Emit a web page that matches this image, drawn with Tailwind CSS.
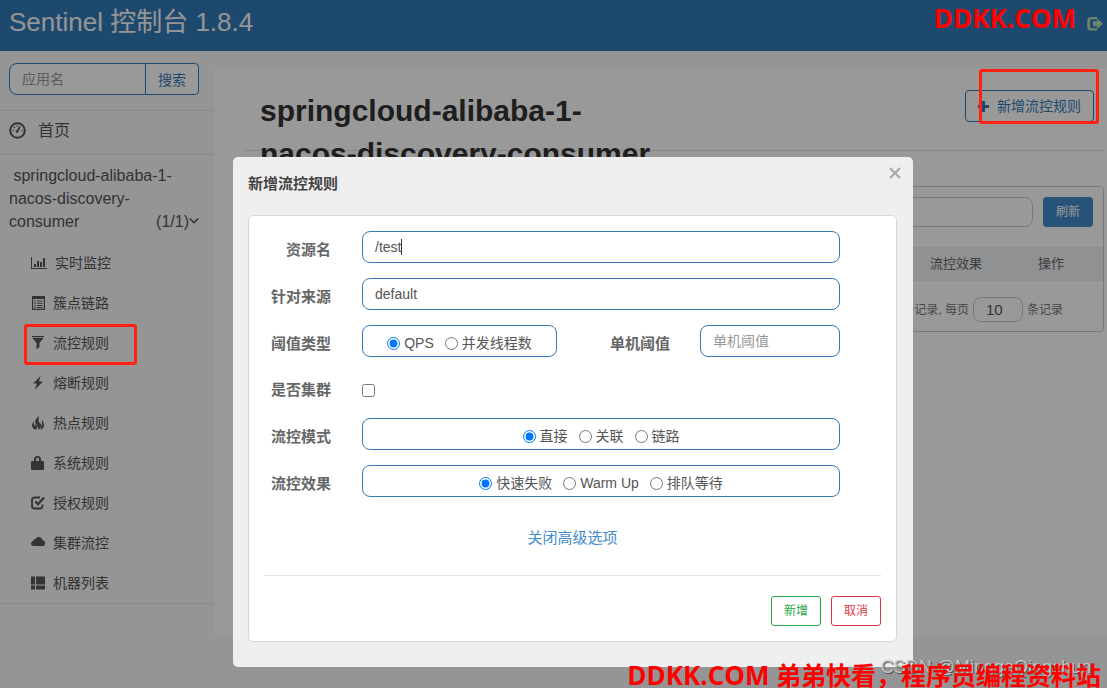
<!DOCTYPE html>
<html lang="zh-CN">
<head>
    <meta charset="UTF-8">
    <meta name="viewport" content="width=device-width, initial-scale=1.0">
    <title>Sentinel 控制台</title>
    <script src="https://cdn.jsdelivr.net/npm/@tailwindcss/browser@4"></script>
</head>
<body class="relative min-h-screen overflow-x-hidden bg-[#f8f8f8] font-['Liberation_Sans','Noto_Sans_CJK_SC',sans-serif] text-sm text-[#555]">
    <!-- 顶部导航 -->
    <header class="flex h-[51px] items-center justify-between bg-[#337ab7] pr-1 pl-[9px]">
        <a href="#" class="pb-2 text-[26px] leading-9 text-[#f8f8f8]">Sentinel 控制台 1.8.4</a>
        <a href="#" aria-label="退出" class="pb-1 text-[#b8dcb8]">
            <svg class="h-4 w-4" viewBox="0 0 16 16" fill="currentColor"><path d="M10 1v2.300H4.500Q3 3.300 3 4.800v5.900Q3 12.200 4.500 12.200H10v2.300H4Q0.300 14.500 0.300 11V4.500Q0.300 1 4 1z"/><path d="M10 2.500 16 7.700l-6 5.200V10.200H6V5.200h4z"/></svg>
        </a>
    </header>

    <div class="flex">
        <!-- 侧边栏 -->
        <aside class="w-[214px] shrink-0 text-[#555]">
            <form class="flex border-b border-[#e7e7e7] pt-3 pr-[15px] pb-[15px] pl-[9px]">
                <input type="text" aria-label="应用名" placeholder="应用名" class="h-8 w-0 flex-1 rounded-l-lg border border-[#337ab7] bg-white px-3 text-sm placeholder:text-[#999]">
                <button type="button" class="-ml-px h-8 w-[54px] rounded-r border border-[#337ab7] bg-white pt-px text-sm text-[#337ab7]">搜索</button>
            </form>
            <a href="#" class="flex h-11 items-center gap-3 border-b border-[#e7e7e7] pb-1 pl-[9px] text-base">
                <svg class="h-[17px] w-[17px]" viewBox="0 0 17 17" fill="none" stroke="currentColor"><circle cx="8.500" cy="8.500" r="7.300" stroke-width="2"/><path d="M8 10 11 4.500" stroke-width="1.600"/><circle cx="8" cy="9.500" r="1.300" fill="currentColor" stroke="none"/><path d="M3.500 8.500h1.500M12.500 8.500h1M5 5l1 1M8 3.500v1.300" stroke-width="1.200"/></svg>
                首页
            </a>
            <nav class="border-b border-[#e7e7e7] pt-[9px]">
                <a href="#" class="block pr-[15px] pb-[10px] pl-[9px] text-base leading-[23px]">
                    <span class="block pr-4">&nbsp;springcloud-alibaba-1-nacos-discovery-</span>
                    <span class="flex items-center justify-between">
                        consumer
                        <span class="flex items-center">(1/1)
                            <svg class="h-[10px] w-[10px]" viewBox="0 0 10 10" fill="none" stroke="currentColor" stroke-width="1.600"><path d="M.8 1.500 5 5.700 9.200 1.500"/></svg>
                        </span>
                    </span>
                </a>
                <ul class="pl-[31px]">
                    <li><a href="#" class="flex h-10 items-center gap-2">
                        <svg class="h-4 w-4" viewBox="0 0 16 16" fill="currentColor"><path d="M0 2h1v11h15v1H0zM3 9h2v3H3zM6 6h2v6H6zM9 7h2v5H9zM12 3h2v9h-2z"/></svg>
                        实时监控</a></li>
                    <li><a href="#" class="flex h-10 items-center gap-2">
                        <svg class="h-[14px] w-[14px]" viewBox="0 0 14 14" fill="currentColor"><path fill-rule="evenodd" d="M1 0h13v14H1zM2.200 3v9.800h10.600V3z"/><path d="M3.500 4.500h1.300v1.200H3.500zM6 4.500h5.500v1H6zM3.500 6.700h1.300v1.200H3.500zM6 6.700h5.500v1H6zM3.500 9h1.300v1.200H3.500zM6 9h5.500v1H6zM3.500 11h1.300v1H3.500zM6 11h5.500v1H6z"/></svg>
                        簇点链路</a></li>
                    <li><a href="#" class="flex h-10 items-center gap-2">
                        <svg class="h-[14px] w-[14px]" viewBox="0 0 14 14" fill="currentColor"><path d="M1 0h12v1.200H1zM1.500 2h11L8.500 7v4L5.500 13.500V7z"/></svg>
                        流控规则</a></li>
                    <li><a href="#" class="flex h-10 items-center gap-2">
                        <svg class="h-[14px] w-[14px]" viewBox="0 0 14 14" fill="currentColor"><path d="M9.500 0 2 7.500h4L3.500 14 12 5.500H8z"/></svg>
                        熔断规则</a></li>
                    <li><a href="#" class="flex h-10 items-center gap-2">
                        <svg class="h-[14px] w-[14px]" viewBox="0 0 14 14" fill="currentColor"><path d="M7.500 0c-1 2-4 3.500-3.200 6.500C4.600 8 6 8.500 5.500 10.500 5.200 9.200 4 9 4.200 7.500 3.500 8 3.500 9.500 4 10.500 3 10 2.500 8 3.300 5.500 1.500 6.500.5 9 1.300 11 2 12.700 3.500 13.500 5.500 14 4.500 12.500 6.500 12 6.700 10c.8 1 .3 2.500.5 4C8.500 13.500 9.500 12 9 10c.8.700 1 2 .5 3.800 2.500-.8 4-3.300 3.300-6C12.500 6.300 11.500 5.500 11.700 4c-1 .8-1 2.500-.5 3.500.3 1 0 2-.7 2.500C10.800 7 8 7.500 7.500 5 7.200 3.500 8.500 2 7.500 0z"/></svg>
                        热点规则</a></li>
                    <li><a href="#" class="flex h-10 items-center gap-2">
                        <svg class="h-[14px] w-[14px]" viewBox="0 0 14 14" fill="currentColor"><path fill-rule="evenodd" d="M3 5V3.500Q3 0 6.300 0h.5Q10 0 10 3.500V5h2q1 0 1 1v7q0 1-1 1H1q-1 0-1-1V6q0-1 1-1zM5 5h3V3.500Q8 1.700 6.500 1.700 5 1.700 5 3.500z"/></svg>
                        系统规则</a></li>
                    <li><a href="#" class="flex h-10 items-center gap-2">
                        <svg class="h-[14px] w-[14px]" viewBox="0 0 14 14" fill="none" stroke="currentColor"><path d="M9 1.500H3.500Q1 1.500 1 4v6q0 2.500 2.500 2.500H9q2.500 0 2.500-2.500V8.500" stroke-width="1.800"/><path d="M4.300 5.500 7 8.200 13 1.500" stroke-width="2.300"/></svg>
                        授权规则</a></li>
                    <li><a href="#" class="flex h-10 items-center gap-2">
                        <svg class="h-[14px] w-[14px]" viewBox="0 0 14 14" fill="currentColor"><path d="M3 10Q0 10 0 7.500q0-2 2-2.500Q2.500 3 4.500 3 5.500 1 7.700 1q3 0 3.500 3Q14 4.500 14 7.200 14 10 11.500 10z"/></svg>
                        集群流控</a></li>
                    <li><a href="#" class="flex h-10 items-center gap-2">
                        <svg class="h-[14px] w-[14px]" viewBox="0 0 14 14" fill="currentColor"><path d="M0 0.500h4v8H0zM5 0.500h9v8H5zM0 9.500h4v4H0zM5 9.500h9v4H5z"/></svg>
                        机器列表</a></li>
                </ul>
            </nav>
        </aside>

        <!-- 规则列表 -->
        <main class="mt-[17px] min-h-[calc(100vh-120px)] flex-1 bg-white pr-[3px] pl-[30px]">
            <div class="flex h-[83px] justify-between border-b border-[#e0e0e0] pr-[10px] pl-4">
                <h1 class="max-w-[400px] pt-[21px] text-[30px] leading-[43px] font-bold text-[#333]">springcloud-alibaba-1-nacos-discovery-consumer</h1>
                <button type="button" class="mt-[22px] flex h-8 w-[129px] items-center justify-center gap-2 rounded border border-[#337ab7] text-sm text-[#337ab7]">
                    <svg class="h-[11px] w-[11px]" viewBox="0 0 11 11" fill="currentColor"><path d="M4 0h3v4h4v3H7v4H4V7H0V4h4z"/></svg>
                    新增流控规则
                </button>
            </div>
            <section class="mt-[35px] rounded border border-[#ccc]">
                <div class="flex items-center justify-end gap-[10px] pt-[10px] pr-[10px] pb-5">
                    <input type="text" aria-label="关键字" class="h-[30px] w-[200px] rounded-lg border border-[#ccc] px-3">
                    <button type="button" class="h-[30px] w-[50px] rounded bg-[#428bca] text-xs text-white">刷新</button>
                </div>
                <table class="w-full table-fixed text-left text-[13px] text-[#666]">
                    <thead>
                        <tr class="h-[34px] bg-[#eff2f5]">
                            <td></td>
                            <th class="w-[108px] font-normal">流控效果</th>
                            <th class="w-[65px] font-normal">操作</th>
                        </tr>
                    </thead>
                </table>
                <div class="flex items-center justify-end gap-1 pt-4 pr-10 pb-[9px] text-xs text-[#777]">
                    <label for="pageSize">共 0 条记录, 每页</label>
                    <input id="pageSize" type="text" value="10" class="h-[25px] w-[50px] rounded-lg border border-[#ccc] px-3 text-[15px] text-[#555]">
                    <span>条记录</span>
                </div>
            </section>
        </main>
    </div>

    <!-- 遮罩 -->
    <div class="absolute inset-0 bg-black/40"></div>

    <!-- 新增流控规则弹窗 -->
    <div class="absolute inset-x-0 top-[157px] flex justify-center pl-[39px]">
        <div role="dialog" aria-labelledby="dialogTitle" class="w-[680px] rounded-[5px] bg-[#efefef] pr-4 pb-[25px] pl-[15px]">
            <div class="flex h-[58px] justify-between">
                <h2 id="dialogTitle" class="pt-4 text-[15px] leading-[22px] font-bold text-[#444]">新增流控规则</h2>
                <button type="button" aria-label="关闭" class="-mr-2 h-8 px-1 text-[#aaa]">
                    <svg class="h-3 w-3" viewBox="0 0 12 12" fill="none" stroke="currentColor" stroke-width="2.400"><path d="M1 1l10 10M11 1 1 11"/></svg>
                </button>
            </div>
            <form class="rounded-[5px] border border-[#d8d8d8] bg-white px-[15px] pt-[15px] pb-[15px]">
                <div class="flex flex-col gap-[15px] pr-[41px]">
                    <div class="flex items-center">
                        <label for="resource" class="mr-[31px] w-[67px] pt-[5px] text-right text-[15px] font-bold text-[#666]">资源名</label>
                        <div class="relative flex-1">
                            <input id="resource" type="text" value="/test" class="block h-8 w-full rounded-lg border border-[#337ab7] px-3 text-sm">
                            <span class="absolute top-2 left-[39px] h-4 w-px bg-[#333]"></span>
                        </div>
                    </div>
                    <div class="flex items-center">
                        <label for="limitApp" class="mr-[31px] w-[67px] pt-[5px] text-right text-[15px] font-bold text-[#666]">针对来源</label>
                        <input id="limitApp" type="text" value="default" class="h-8 flex-1 rounded-lg border border-[#337ab7] px-3 text-sm">
                    </div>
                    <div class="flex items-center">
                        <span class="mr-[31px] w-[67px] pt-[5px] text-right text-[15px] font-bold text-[#666]">阈值类型</span>
                        <div class="flex h-8 w-[195px] items-center justify-center gap-[11px] rounded-lg border border-[#337ab7] pt-1">
                            <label class="flex items-center gap-1"><input type="radio" name="grade" class="h-[13px] w-[13px]" checked>QPS</label>
                            <label class="flex items-center gap-1"><input type="radio" name="grade" class="h-[13px] w-[13px]">并发线程数</label>
                        </div>
                        <label for="count" class="mr-[30px] flex-1 pt-[5px] text-right text-[15px] font-bold text-[#666]">单机阈值</label>
                        <input id="count" type="text" placeholder="单机阈值" class="h-8 w-[140px] rounded-lg border border-[#337ab7] px-3 text-sm placeholder:text-[#999]">
                    </div>
                    <div class="flex h-[31px] items-center">
                        <label for="cluster" class="mr-[31px] w-[67px] pt-[5px] text-right text-[15px] font-bold text-[#666]">是否集群</label>
                        <input id="cluster" type="checkbox" class="mt-[5px] h-[13px] w-[13px]">
                    </div>
                    <div class="flex items-center">
                        <span class="mr-[31px] w-[67px] pt-[5px] text-right text-[15px] font-bold text-[#666]">流控模式</span>
                        <div class="flex h-8 flex-1 items-center justify-center gap-[11px] rounded-lg border border-[#337ab7] pt-1">
                            <label class="flex items-center gap-1"><input type="radio" name="strategy" class="h-[13px] w-[13px]" checked>直接</label>
                            <label class="flex items-center gap-1"><input type="radio" name="strategy" class="h-[13px] w-[13px]">关联</label>
                            <label class="flex items-center gap-1"><input type="radio" name="strategy" class="h-[13px] w-[13px]">链路</label>
                        </div>
                    </div>
                    <div class="flex items-center">
                        <span class="mr-[31px] w-[67px] pt-[5px] text-right text-[15px] font-bold text-[#666]">流控效果</span>
                        <div class="flex h-8 flex-1 items-center justify-center gap-[11px] rounded-lg border border-[#337ab7] pt-1">
                            <label class="flex items-center gap-1"><input type="radio" name="behavior" class="h-[13px] w-[13px]" checked>快速失败</label>
                            <label class="flex items-center gap-1"><input type="radio" name="behavior" class="h-[13px] w-[13px]">Warm Up</label>
                            <label class="flex items-center gap-1"><input type="radio" name="behavior" class="h-[13px] w-[13px]">排队等待</label>
                        </div>
                    </div>
                </div>
                <div class="flex justify-center border-b border-[#e3e3e3] pt-[30px] pb-[26px]">
                    <a href="#" class="text-[15px] leading-[22px] text-[#428bca]">关闭高级选项</a>
                </div>
                <div class="flex justify-end gap-[10px] pt-5">
                    <button type="button" class="h-[30px] w-[50px] rounded-[3px] border border-[#28a745] text-xs text-[#28a745]">新增</button>
                    <button type="button" class="h-[30px] w-[50px] rounded-[3px] border border-[#dc3545] text-xs text-[#dc3545]">取消</button>
                </div>
            </form>
        </div>
    </div>

    <!-- 标注框 -->
    <div class="absolute top-[324px] left-6 h-[41px] w-[113px] rounded-[3px] border-3 border-[#ff2211]"></div>
    <div class="absolute top-[69px] right-2 h-[55px] w-[120px] rounded-[3px] border-3 border-[#ff2211]"></div>

    <!-- 水印 -->
    <div class="absolute right-[16px] bottom-[11px] text-lg leading-5 text-[#c4c4c4] [text-shadow:1px_1px_1px_#444]">CSDN @MinggeQingchun</div>
    <div class="absolute top-[3px] right-[31px] font-['Open_Sans','Noto_Sans_CJK_SC',sans-serif] text-[26px] leading-[30px] font-bold text-[#ff0000]">DDKK.COM</div>
    <div class="absolute right-[6px] bottom-0 font-['Open_Sans','Noto_Sans_CJK_SC',sans-serif] text-[25px] leading-[26px] font-bold whitespace-nowrap text-[#ff0000]"><span class="text-[26px]">DDKK.COM</span> 弟弟快看，程序员编程资料站</div>
</body>
</html>
